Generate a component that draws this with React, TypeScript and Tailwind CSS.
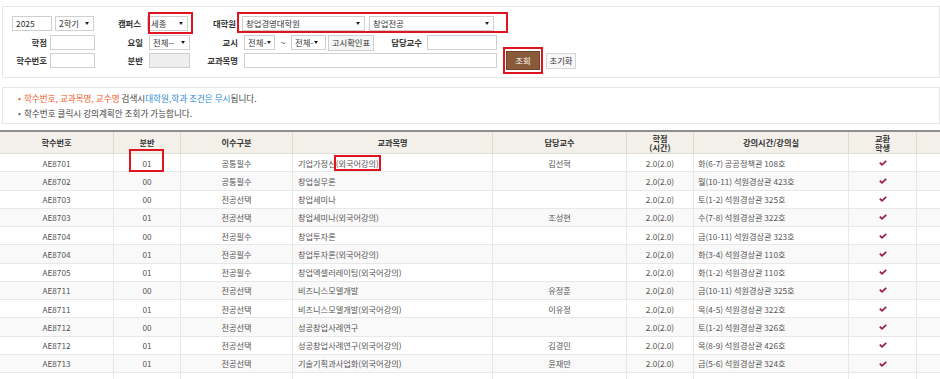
import React from "react";

interface Course {
    code: string;
    section: string;
    kind: string;
    name: string;
    prof: string;
    credit: string;
    time: string;
}

const courses: Course[] = [
    { code: "AE8701", section: "01", kind: "공통필수", name: "기업가정신(외국어강의)", prof: "김선혁", credit: "2.0(2.0)", time: "화(6-7) 공공정책관 108호" },
    { code: "AE8702", section: "00", kind: "공통필수", name: "창업실무론", prof: "", credit: "2.0(2.0)", time: "월(10-11) 석원경상관 423호" },
    { code: "AE8703", section: "00", kind: "전공선택", name: "창업세미나", prof: "", credit: "2.0(2.0)", time: "토(1-2) 석원경상관 325호" },
    { code: "AE8703", section: "01", kind: "전공선택", name: "창업세미나(외국어강의)", prof: "조성현", credit: "2.0(2.0)", time: "수(7-8) 석원경상관 322호" },
    { code: "AE8704", section: "00", kind: "전공필수", name: "창업투자론", prof: "", credit: "2.0(2.0)", time: "금(10-11) 석원경상관 323호" },
    { code: "AE8704", section: "01", kind: "전공필수", name: "창업투자론(외국어강의)", prof: "", credit: "2.0(2.0)", time: "화(3-4) 석원경상관 110호" },
    { code: "AE8705", section: "01", kind: "전공필수", name: "창업엑셀러레이팅(외국어강의)", prof: "", credit: "2.0(2.0)", time: "화(1-2) 석원경상관 110호" },
    { code: "AE8711", section: "00", kind: "전공선택", name: "비즈니스모델개발", prof: "유정훈", credit: "2.0(2.0)", time: "금(10-11) 석원경상관 325호" },
    { code: "AE8711", section: "01", kind: "전공선택", name: "비즈니스모델개발(외국어강의)", prof: "이유정", credit: "2.0(2.0)", time: "목(4-5) 석원경상관 322호" },
    { code: "AE8712", section: "00", kind: "전공선택", name: "성공창업사례연구", prof: "", credit: "2.0(2.0)", time: "토(1-2) 석원경상관 326호" },
    { code: "AE8712", section: "01", kind: "전공선택", name: "성공창업사례연구(외국어강의)", prof: "김경민", credit: "2.0(2.0)", time: "목(8-9) 석원경상관 426호" },
    { code: "AE8713", section: "01", kind: "전공선택", name: "기술기획과사업화(외국어강의)", prof: "윤재만", credit: "2.0(2.0)", time: "금(5-6) 석원경상관 324호" },
    { code: "AE8715", section: "01", kind: "전공선택", name: "글로벌벤처창업(외국어강의)", prof: "", credit: "2.0(2.0)", time: "화(1-2) 석원경상관 310호" },
];

function Arrow() {
    return <span className="inline-block w-0 h-0 border-l-[2.5px] border-r-[2.5px] border-t-[3px] border-l-transparent border-r-transparent border-t-[#222]" />;
}

function Select({ value, w, tight }: { value: string; w: string; tight?: boolean }) {
    return (
        <div className={`${w} h-[15px] border border-[#cfcfcf] bg-white flex items-center whitespace-nowrap pl-[3px] text-[#333] ${tight ? "gap-[1px]" : "justify-between pr-[4px]"}`}>
            <span>{value}</span>
            <Arrow />
        </div>
    );
}

function Input({ w, value, disabled }: { w: string; value?: string; disabled?: boolean }) {
    return (
        <div className={`${w} h-[15px] border border-[#cfcfcf] ${disabled ? "bg-[#eeeeee]" : "bg-white"} flex items-center pl-[3px] text-[#333]`}>
            {value}
        </div>
    );
}

function Label({ text, w }: { text: string; w: string }) {
    return <div className={`${w} text-right text-[#333] font-semibold whitespace-nowrap`}>{text}</div>;
}

function Check() {
    return (
        <svg width="8" height="6" viewBox="0 0 8 6">
            <path d="M0.8 2.6 L3 4.8 L7.2 0.8" fill="none" stroke="#9c1a3c" strokeWidth="1.7" />
        </svg>
    );
}

// highlighted (외국어강의) suffix in the first row
function CourseName({ name, mark }: { name: string; mark: boolean }) {
    const i = name.indexOf("(");
    if (!mark || i < 0) return <>{name}</>;
    return (
        <>
            {name.slice(0, i)}
            <span className="relative">
                {name.slice(i)}
                <span className="absolute -left-[2px] -right-[2px] -top-[4px] -bottom-[4px] border-2 border-[#e0141e]" />
            </span>
        </>
    );
}

const cols = ["w-[113px]", "w-[67px]", "w-[112px]", "w-[200px]", "w-[134px]", "w-[67px]", "w-[155px]", "w-[68px]", "w-[60px]"];

export default function App() {
    return (
        <div className="relative w-[940px] h-[379px] overflow-hidden bg-white text-[8.4px] leading-none" style={{ fontFamily: '"Noto Sans CJK KR", "Noto Sans", sans-serif' }}>
            {/* search form */}
            <section className="mt-[6px] ml-[2px] h-[72px] border border-[#e6e6e6] pt-[9px] flex flex-col gap-[4px]">
                <div className="flex items-center h-[15px] pl-[9px]">
                    <Input w="w-[40px]" value="2025" />
                    <div className="ml-[3px]"><Select value="2학기" w="w-[39px]" /></div>
                    <Label text="캠퍼스" w="w-[47px]" />
                    <div className="ml-[6px]"><Select value="세종" w="w-[41px]" /></div>
                    <Label text="대학원" w="w-[48px]" />
                    <div className="ml-[6px]"><Select value="창업경영대학원" w="w-[123px]" /></div>
                    <div className="ml-[4px]"><Select value="창업전공" w="w-[125px]" /></div>
                </div>
                <div className="flex items-center h-[15px]">
                    <Label text="학점" w="w-[44px]" />
                    <div className="ml-[3px]"><Input w="w-[45px]" /></div>
                    <Label text="요일" w="w-[48px]" />
                    <div className="ml-[6px]"><Select value="전체--" w="w-[41px]" /></div>
                    <Label text="교시" w="w-[48px]" />
                    <div className="ml-[6px]"><Select value="전체-" w="w-[31px]" tight /></div>
                    <div className="w-[16px] text-center text-[#333]">~</div>
                    <Select value="전체-" w="w-[35px]" tight />
                    <div className="ml-[2px] w-[46px] h-[16px] border border-[#cfcfcf] bg-[#f6f6f6] flex items-center justify-center text-[#333] whitespace-nowrap">고시확인표</div>
                    <Label text="담당교수" w="w-[48px]" />
                    <div className="ml-[5px]"><Input w="w-[70px]" /></div>
                </div>
                <div className="flex items-center h-[15px] -mt-[1px]">
                    <Label text="학수번호" w="w-[44px]" />
                    <div className="ml-[3px]"><Input w="w-[45px]" /></div>
                    <Label text="분반" w="w-[48px]" />
                    <div className="ml-[6px]"><Input w="w-[41px]" disabled /></div>
                    <Label text="교과목명" w="w-[48px]" />
                    <div className="ml-[6px]"><Input w="w-[253px]" /></div>
                    <div className="ml-[9px] w-[34px] h-[19px] bg-[#8a5b3b] border border-[#6e4529] flex items-center justify-center text-white">조회</div>
                    <div className="ml-[6px] w-[30px] h-[16px] border border-[#d5d5d5] bg-[#f8f8f8] flex items-center justify-center text-[#333] whitespace-nowrap">초기화</div>
                </div>
            </section>

            {/* notice */}
            <section className="mt-[9px] ml-[2px] h-[37px] border border-[#e6e6e6] pt-[3px] pl-[15px] text-[8.6px] leading-[15px]">
                <div className="flex gap-[3px]">
                    <span className="text-[#e8602c]">•</span>
                    <span>
                        <span className="text-[#f05a28]">학수번호, 교과목명, 교수명</span>
                        <span className="text-[#444]"> 검색시</span>
                        <span className="text-[#2d8bd2]">대학원,학과 조건은 무시</span>
                        <span className="text-[#444]">됩니다.</span>
                    </span>
                </div>
                <div className="flex gap-[3px] text-[#444]">
                    <span className="text-[#666]">•</span>
                    <span>학수번호 클릭시 강의계획안 조회가 가능합니다.</span>
                </div>
            </section>

            {/* table */}
            <section className="mt-[6px] w-[980px] border-t-[2px] border-[#8e8e8e] text-[8.2px]">
                <div className="flex h-[22px] bg-[#f3f0ea] border-b border-[#e2ded6] text-[#333] font-semibold">
                    {["학수번호", "분반", "이수구분", "교과목명", "담당교수", "학점\n(시간)", "강의시간/강의실", "교환\n학생", ""].map((h, i) => (
                        <div key={i} className={`${cols[i]} flex items-center justify-center text-center whitespace-pre leading-[8.6px] ${i > 0 ? "border-l border-[#dedad2]" : ""}`}>
                            {h}
                        </div>
                    ))}
                </div>
                {courses.map((c, r) => (
                    <div key={r} className={`flex h-[18.27px] border-b border-[#e8e8e8] text-[#555] ${r % 2 === 1 ? "bg-[#f9f9f9]" : "bg-white"}`}>
                        <div className={`${cols[0]} flex items-center justify-center`}>{c.code}</div>
                        <div className={`${cols[1]} relative flex items-center justify-center border-l border-[#e8e8e8]`}>
                            {c.section}
                            {r === 0 && <div className="absolute left-[15px] -top-[5px] w-[35px] h-[23px] border-2 border-[#e0141e]" />}
                        </div>
                        <div className={`${cols[2]} flex items-center justify-center border-l border-[#e8e8e8]`}>{c.kind}</div>
                        <div className={`${cols[3]} flex items-center pl-[5px] border-l border-[#e8e8e8] whitespace-nowrap`}>
                            <CourseName name={c.name} mark={r === 0} />
                        </div>
                        <div className={`${cols[4]} flex items-center justify-center border-l border-[#e8e8e8]`}>{c.prof}</div>
                        <div className={`${cols[5]} flex items-center justify-center border-l border-[#e8e8e8]`}>{c.credit}</div>
                        <div className={`${cols[6]} flex items-center pl-[4px] border-l border-[#e8e8e8] whitespace-nowrap`}>{c.time}</div>
                        <div className={`${cols[7]} flex items-center justify-center border-l border-[#e8e8e8]`}><Check /></div>
                        <div className={`${cols[8]} border-l border-[#e8e8e8]`} />
                    </div>
                ))}
            </section>

            {/* red annotation boxes on the form */}
            <div className="absolute left-[148px] top-[12px] w-[45px] h-[22px] border-2 border-[#e0141e]" />
            <div className="absolute left-[237px] top-[12px] w-[271px] h-[21px] border-2 border-[#e0141e]" />
            <div className="absolute left-[503px] top-[47px] w-[40px] h-[27px] border-2 border-[#e0141e]" />
        </div>
    );
}
